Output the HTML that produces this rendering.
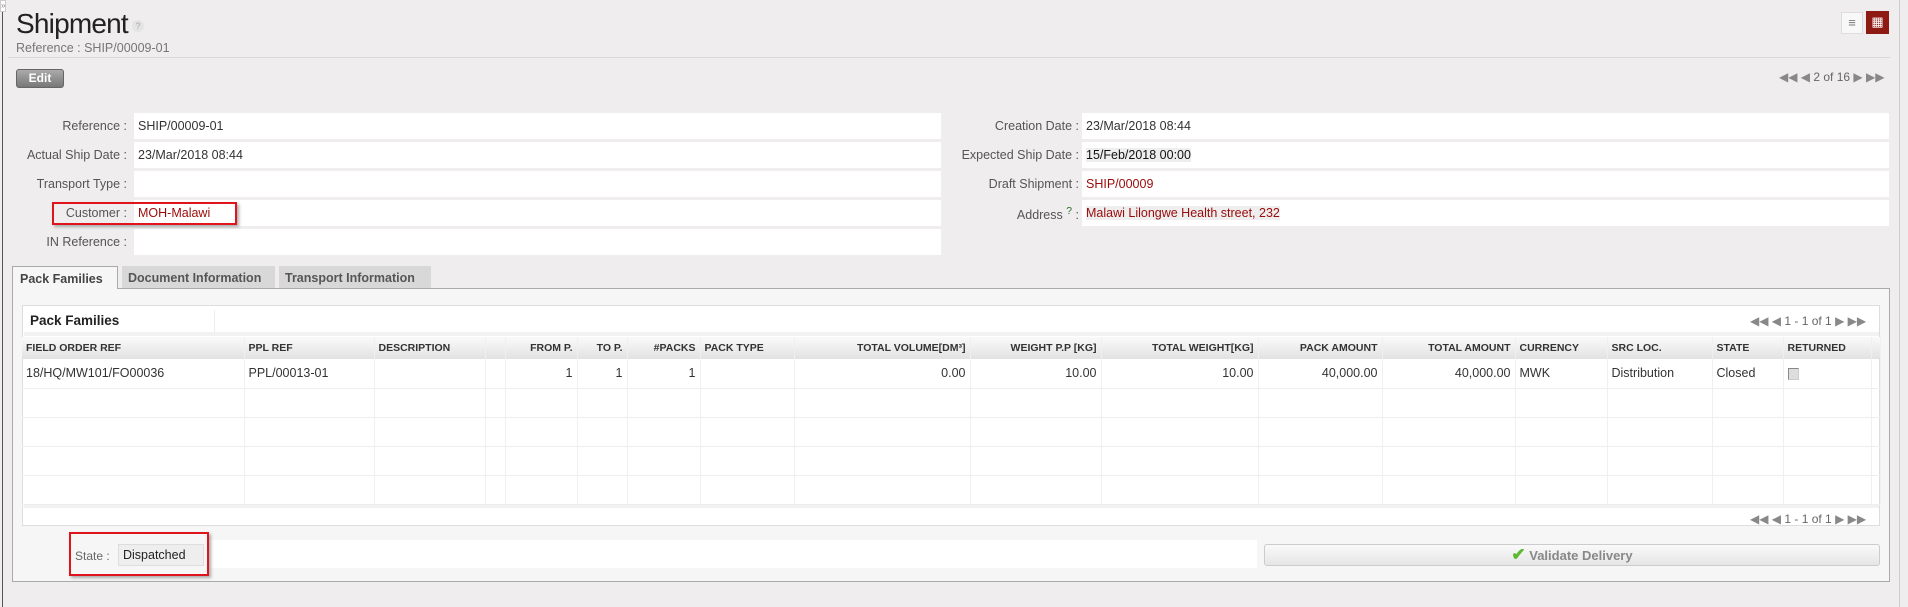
<!DOCTYPE html>
<html><head><meta charset="utf-8"><style>
*{box-sizing:border-box;margin:0;padding:0}
body{width:1908px;height:607px;background:#efeded;font-family:"Liberation Sans",sans-serif;font-size:12.5px;color:#444;position:relative;overflow:hidden}
.a{position:absolute}
.lbl{position:absolute;text-align:right;color:#555;font-size:12.5px}
.box{position:absolute;background:#fff;height:26px;line-height:26px;padding-left:4px;color:#333}
.red{color:#9b0a0a}
table{border-collapse:collapse;table-layout:fixed;position:absolute}
td,th{overflow:hidden;white-space:nowrap;padding:0 4px;border-right:1px solid #f0f0f0}
th{font-size:10.5px;font-weight:bold;color:#333;text-align:left;height:22px;background:linear-gradient(#fafafa,#e2e2e2)}
td{height:29px;border-bottom:1px solid #eee;color:#333;font-size:12.5px}
.r{text-align:right}
.pg{color:#888;font-size:12px}
.pg b{color:#666;font-weight:normal}
</style></head><body>
<div class="a" style="left:0;top:0;width:6px;height:12px;border:1px solid #ccc;background:#fff;font-size:8px;line-height:10px;color:#888">»</div>
<div class="a" style="left:2px;top:12px;width:1px;height:595px;background:#555"></div>
<div class="a" style="left:1899px;top:0;width:1px;height:607px;background:#ccc"></div>
<div class="a" style="left:16px;top:8px;font-size:28px;color:#222;letter-spacing:-0.8px">Shipment</div>
<div class="a" style="left:132px;top:20px;width:12px;height:12px;border-radius:6px;background:#e4e4e4;color:#aaa;font-size:9px;text-align:center;line-height:12px">?</div>
<div class="a" style="left:16px;top:41px;font-size:12.5px;color:#777">Reference : SHIP/00009-01</div>
<div class="a" style="left:8px;top:57px;width:1882px;height:1px;background:#d8d8d8"></div>
<div class="a" style="left:16px;top:69px;width:48px;height:19px;border:1px solid #666;border-radius:3px;background:linear-gradient(#aaa,#777);color:#fff;font-size:12px;font-weight:bold;text-align:center;line-height:17px">Edit</div>
<div class="a" style="left:1841px;top:12px;width:22px;height:22px;background:#f8f8f8;border:1px solid #ddd;color:#777;font-size:13px;text-align:center;line-height:20px">≡</div>
<div class="a" style="left:1866px;top:11px;width:23px;height:23px;background:#8e1a14;color:#fff;font-size:13px;text-align:center;line-height:22px">▦</div>
<div class="a pg" style="left:1779px;top:70px">◀◀ ◀ <b>2 of 16</b> ▶ ▶▶</div>

<div class="lbl" style="left:0;width:127px;top:119px">Reference :</div>
<div class="box" style="left:134px;width:807px;top:113px">SHIP/00009-01</div>
<div class="lbl" style="left:0;width:127px;top:148px">Actual Ship Date :</div>
<div class="box" style="left:134px;width:807px;top:142px">23/Mar/2018 08:44</div>
<div class="lbl" style="left:0;width:127px;top:177px">Transport Type :</div>
<div class="box" style="left:134px;width:807px;top:171px"></div>
<div class="lbl" style="left:0;width:127px;top:206px">Customer :</div>
<div class="box red" style="left:134px;width:807px;top:200px">MOH-Malawi</div>
<div class="lbl" style="left:0;width:127px;top:235px">IN Reference :</div>
<div class="box" style="left:134px;width:807px;top:229px"></div>
<div class="a" style="left:52px;top:202px;width:185px;height:23px;border:2px solid #e0141c;box-shadow:2px 2px 3px #aaa"></div>

<div class="lbl" style="left:900px;width:179px;top:119px">Creation Date :</div>
<div class="box" style="left:1082px;width:807px;top:113px">23/Mar/2018 08:44</div>
<div class="lbl" style="left:900px;width:179px;top:148px">Expected Ship Date :</div>
<div class="box" style="left:1082px;width:807px;top:142px;color:#111"><span style="background:#eee">15/Feb/2018 00:00</span></div>
<div class="lbl" style="left:900px;width:179px;top:177px">Draft Shipment :</div>
<div class="box red" style="left:1082px;width:807px;top:171px">SHIP/00009</div>
<div class="lbl" style="left:900px;width:179px;top:206px">Address <sup style="color:#2a6a2a">?</sup> :</div>
<div class="box red" style="left:1082px;width:807px;top:200px"><span style="background:#eee">Malawi Lilongwe Health street, 232</span></div>

<div class="a" style="left:12px;top:288px;width:1878px;height:294px;border:1px solid #aaa;background:#f6f6f6"></div>
<div class="a" style="left:12px;top:266px;width:106px;height:23px;background:#f6f6f6;border:1px solid #aaa;border-bottom:none;font-weight:bold;font-size:12.5px;color:#444;padding:5px 0 0 7px;white-space:nowrap">Pack Families</div>
<div class="a" style="left:122px;top:266px;width:153px;height:22px;background:#d8d8d8;font-weight:bold;font-size:12.5px;color:#555;padding:5px 0 0 6px;white-space:nowrap">Document Information</div>
<div class="a" style="left:279px;top:266px;width:152px;height:22px;background:#d8d8d8;font-weight:bold;font-size:12.5px;color:#555;padding:5px 0 0 6px;white-space:nowrap">Transport Information</div>

<div class="a" style="left:22px;top:305px;width:1858px;height:221px;border:1px solid #ddd;background:#fff"></div>
<div class="a" style="left:30px;top:313px;font-weight:bold;font-size:13.5px;color:#222">Pack Families</div>
<div class="a" style="left:214px;top:310px;width:1px;height:22px;background:#eee"></div>
<div class="a pg" style="left:1750px;top:314px">◀◀ ◀ <b>1 - 1 of 1</b> ▶ ▶▶</div>
<div class="a" style="left:24px;top:332px;width:1855px;height:4px;background:#f2f2f2"></div>
<table style="left:22px;top:337px;width:1858px">
<colgroup><col style="width:222px"><col style="width:130px"><col style="width:111px"><col style="width:20px"><col style="width:72px"><col style="width:50px"><col style="width:73px"><col style="width:94px"><col style="width:176px"><col style="width:131px"><col style="width:157px"><col style="width:124px"><col style="width:133px"><col style="width:92px"><col style="width:105px"><col style="width:71px"><col style="width:88px"><col style="width:9px"></colgroup>
<tr><th>FIELD ORDER REF</th><th>PPL REF</th><th>DESCRIPTION</th><th></th><th class="r">FROM P.</th><th class="r">TO P.</th><th class="r">#PACKS</th><th>PACK TYPE</th><th class="r">TOTAL VOLUME[DM³]</th><th class="r">WEIGHT P.P [KG]</th><th class="r">TOTAL WEIGHT[KG]</th><th class="r">PACK AMOUNT</th><th class="r">TOTAL AMOUNT</th><th>CURRENCY</th><th>SRC LOC.</th><th>STATE</th><th>RETURNED</th><th></th></tr>
<tr><td>18/HQ/MW101/FO00036</td><td>PPL/00013-01</td><td></td><td></td><td class="r">1</td><td class="r">1</td><td class="r">1</td><td></td><td class="r">0.00</td><td class="r">10.00</td><td class="r">10.00</td><td class="r">40,000.00</td><td class="r">40,000.00</td><td>MWK</td><td>Distribution</td><td>Closed</td><td><span style="display:inline-block;width:11px;height:12px;background:#ddd;border:1px solid #888;border-right-color:#ccc;border-bottom-color:#ccc;vertical-align:middle"></span></td><td></td></tr>
<tr><td></td><td></td><td></td><td></td><td></td><td></td><td></td><td></td><td></td><td></td><td></td><td></td><td></td><td></td><td></td><td></td><td></td><td></td></tr>
<tr><td></td><td></td><td></td><td></td><td></td><td></td><td></td><td></td><td></td><td></td><td></td><td></td><td></td><td></td><td></td><td></td><td></td><td></td></tr>
<tr><td></td><td></td><td></td><td></td><td></td><td></td><td></td><td></td><td></td><td></td><td></td><td></td><td></td><td></td><td></td><td></td><td></td><td></td></tr>
<tr><td></td><td></td><td></td><td></td><td></td><td></td><td></td><td></td><td></td><td></td><td></td><td></td><td></td><td></td><td></td><td></td><td></td><td></td></tr>
</table>
<div class="a" style="left:24px;top:505px;width:1855px;height:3px;background:#f2f2f2"></div>
<div class="a pg" style="left:1750px;top:512px">◀◀ ◀ <b>1 - 1 of 1</b> ▶ ▶▶</div>

<div class="a" style="left:209px;top:540px;width:1048px;height:28px;background:#fff"></div>
<div class="a" style="left:69px;top:532px;width:140px;height:44px;border:2px solid #e0141c;box-shadow:2px 2px 3px #aaa"></div>
<div class="a" style="left:75px;top:549px;color:#666;font-size:12px">State :</div>
<div class="a" style="left:118px;top:544px;width:86px;height:22px;background:#eee;border:1px solid #ddd;color:#222;font-size:12.5px;line-height:20px;padding-left:4px">Dispatched</div>
<div class="a" style="left:1264px;top:544px;width:616px;height:22px;border:1px solid #ccc;border-radius:3px;background:linear-gradient(#fafafa,#e6e6e6);text-align:center;line-height:20px;color:#888;font-weight:bold;font-size:13px"><span style="color:#5cb82e;font-size:17px">✔</span> Validate Delivery</div>
</body></html>
